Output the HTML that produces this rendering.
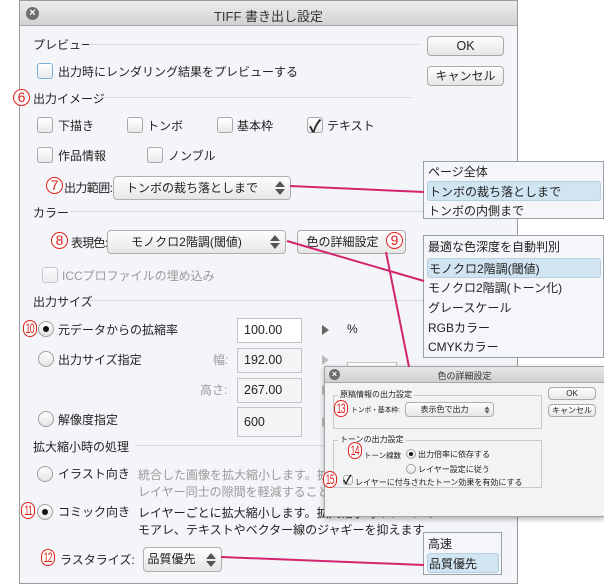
<!DOCTYPE html>
<html><head><meta charset="utf-8">
<style>
*{box-sizing:border-box;margin:0;padding:0}
body{width:604px;height:585px;background:#fff;position:relative;overflow:hidden;font-family:"Liberation Sans","Noto Sans CJK JP",sans-serif;font-size:12px;color:#222}
.a{position:absolute;white-space:nowrap}
#dlg{position:absolute;left:19px;top:0;width:499px;height:584px;background:#f3f5f9;border:1px solid #9a9a9a}
.tb{position:absolute;left:0;top:0;right:0;height:25px;background:linear-gradient(#ececec,#d2d2d2);border-bottom:1px solid #a8a8a8}
.cls{position:absolute;width:13px;height:13px;border-radius:50%;background:#6e6e6e;color:#fff;font-size:11px;line-height:13px;text-align:center;font-weight:bold}
.sec{position:absolute;height:1px;background:#d6d8dc}
.cb{position:absolute;width:16px;height:16px;border:1px solid #a9a9a9;border-radius:3px;background:linear-gradient(#fff,#e9e9e9)}
.rd{position:absolute;width:16px;height:16px;border:1px solid #a0a0a0;border-radius:50%;background:linear-gradient(#fff,#e4e4e4)}
.rd.on::after{content:"";position:absolute;left:4px;top:4px;width:6px;height:6px;border-radius:50%;background:#111}
.rd.s.on::after{left:2px;top:2px;width:4px;height:4px}
.btn{position:absolute;border:1px solid #a9a9a9;border-radius:4px;background:linear-gradient(#fdfdfd,#e6e6e6);text-align:center}
.pop{position:absolute;border:1px solid #b0b0b0;border-radius:4px;background:linear-gradient(#fdfdfd,#e6e6e6);text-align:center}
.arr{position:absolute;right:4px;top:50%;width:12px;height:18px;margin-top:-9px}
.inp{position:absolute;border:1px solid #c4c4c4;background:#fff;padding-left:6px;font-size:12.5px}
.inp.g{background:#f3f4f6}
.num{position:absolute;height:17px;border:1.3px solid #e0201c;border-radius:9px;color:#e0201c;font-size:14px;line-height:15px;text-align:center;width:17px;background:#fff}
.num.w{width:14px;border-radius:7px;overflow:hidden}
.num.w span{display:inline-block;transform:scaleX(.62);margin-left:-6px;margin-right:-6px;letter-spacing:-1px}
.list{position:absolute;border:1px solid #9aa0a8;background:#f4f6f9;font-size:12px}
.list div{position:absolute;left:3px;right:2px;height:20px;line-height:20px;padding-left:1px}
.list .hl{background:#d1e4f1;border:1px solid #b7cfe0;border-radius:3px}
.tri{position:absolute;width:0;height:0;border-top:5px solid transparent;border-bottom:5px solid transparent;border-left:7px solid #666}
.gray{color:#9a9a9a}
#sub{position:absolute;left:324px;top:366px;width:281px;height:151px;background:#f2f3f5;border:1px solid #a5a5a5;box-shadow:0 2px 5px rgba(0,0,0,.3);font-size:8px}
.grp{position:absolute;border:1px solid #c9c9c9}
</style></head><body>

<div id="dlg">
 <div class="tb"><div class="cls" style="left:6px;top:6px">×</div>
  <div class="a" style="left:0;right:0;top:5px;text-align:center;font-size:13px;color:#333">TIFF 書き出し設定</div></div>

 <div class="a" style="left:13px;top:35px">プレビュー</div><div class="sec" style="left:69px;top:43px;width:330px"></div>
 <div class="btn" style="left:407px;top:35px;width:77px;height:20px;line-height:18px;font-size:12.5px">OK</div>
 <div class="btn" style="left:407px;top:65px;width:77px;height:20px;line-height:18px">キャンセル</div>

 <div class="cb" style="left:17px;top:62px;border-color:#7ab0d8"></div><div class="a" style="left:38px;top:62px">出力時にレンダリング結果をプレビューする</div>

 <div class="a" style="left:13px;top:89px">出力イメージ</div><div class="sec" style="left:81px;top:96px;width:310px"></div>

 <div class="cb" style="left:17px;top:116px"></div><div class="a" style="left:38px;top:116px">下描き</div>
 <div class="cb" style="left:107px;top:116px"></div><div class="a" style="left:127px;top:116px">トンボ</div>
 <div class="cb" style="left:197px;top:116px"></div><div class="a" style="left:217px;top:116px">基本枠</div>
 <div class="cb" style="left:287px;top:116px"></div><div class="a" style="left:289px;top:111px;font-size:17px;font-weight:bold">✓</div><div class="a" style="left:307px;top:116px">テキスト</div>
 <div class="cb" style="left:17px;top:146px"></div><div class="a" style="left:38px;top:146px">作品情報</div>
 <div class="cb" style="left:127px;top:146px"></div><div class="a" style="left:148px;top:146px">ノンブル</div>

 <div class="a" style="left:44px;top:178px;letter-spacing:-0.6px">出力範囲:</div>
 <div class="pop" style="left:93px;top:175px;width:178px;height:24px;line-height:22px;padding-right:20px">トンボの裁ち落としまで
  <svg class="arr" viewBox="0 0 12 18"><path d="M6 2L11 8H1Z M6 16L11 10H1Z" fill="#555"/></svg></div>

 <div class="a" style="left:13px;top:203px">カラー</div><div class="sec" style="left:50px;top:210px;width:360px"></div>
 <div class="a" style="left:51px;top:233px;letter-spacing:-0.8px">表現色:</div>
 <div class="pop" style="left:87px;top:229px;width:179px;height:24px;line-height:22px;padding-right:20px">モノクロ2階調(閾値)
  <svg class="arr" viewBox="0 0 12 18"><path d="M6 2L11 8H1Z M6 16L11 10H1Z" fill="#555"/></svg></div>
 <div class="btn" style="left:277px;top:229px;width:109px;height:24px;line-height:22px;padding-right:18px">色の詳細設定</div>

 <div class="cb" style="left:22px;top:266px;opacity:.6"></div><div class="a gray" style="left:42px;top:266px">ICCプロファイルの埋め込み</div>

 <div class="a" style="left:13px;top:292px">出力サイズ</div><div class="sec" style="left:69px;top:299px;width:340px"></div>

 <div class="rd on" style="left:18px;top:320px"></div><div class="a" style="left:38px;top:320px">元データからの拡縮率</div>
 <div class="inp" style="left:217px;top:317px;width:65px;height:25px;line-height:23px">100.00</div>
 <div class="tri" style="left:302px;top:324px"></div><div class="a" style="left:327px;top:321px">%</div>

 <div class="rd" style="left:18px;top:350px"></div><div class="a" style="left:38px;top:350px">出力サイズ指定</div>
 <div class="a gray" style="left:193px;top:350px">幅:</div>
 <div class="inp g" style="left:217px;top:347px;width:65px;height:25px;line-height:23px">192.00</div>
 <div class="tri" style="left:302px;top:354px;border-left-color:#bbb"></div>
 <div class="a" style="left:327px;top:361px;width:50px;height:20px;border:1px solid #c4c4c4;background:#fff"></div>
 <div class="a gray" style="left:180px;top:380px">高さ:</div>
 <div class="inp g" style="left:217px;top:377px;width:65px;height:25px;line-height:23px">267.00</div>
 <div class="tri" style="left:302px;top:384px;border-left-color:#bbb"></div>

 <div class="rd" style="left:18px;top:410px"></div><div class="a" style="left:38px;top:410px">解像度指定</div>
 <div class="inp g" style="left:217px;top:406px;width:65px;height:30px;line-height:28px">600</div>
 <div class="tri" style="left:302px;top:416px;border-left-color:#bbb"></div>

 <div class="a" style="left:13px;top:437px">拡大縮小時の処理</div><div class="sec" style="left:115px;top:444px;width:300px"></div>

 <div class="rd" style="left:17px;top:465px"></div><div class="a" style="left:38px;top:464px">イラスト向き</div>
 <div class="a gray" style="left:118px;top:465px">統合した画像を拡大縮小します。拡大</div>
 <div class="a gray" style="left:118px;top:482px">レイヤー同士の隙間を軽減することか</div>

 <div class="rd on" style="left:17px;top:503px"></div><div class="a" style="left:38px;top:502px">コミック向き</div>
 <div class="a" style="left:118px;top:503px">レイヤーごとに拡大縮小します。拡大縮小時のトーンの</div>
 <div class="a" style="left:118px;top:520px">モアレ、テキストやベクター線のジャギーを抑えます</div>

 <div class="a" style="left:40px;top:550px">ラスタライズ:</div>
 <div class="pop" style="left:123px;top:546px;width:79px;height:25px;line-height:23px;padding-right:22px">品質優先
  <svg class="arr" viewBox="0 0 12 18"><path d="M6 2L11 8H1Z M6 16L11 10H1Z" fill="#555"/></svg></div>
</div>

<!-- lists -->
<div class="list" style="left:423px;top:161px;width:181px;height:58px">
 <div style="top:0">ページ全体</div><div class="hl" style="top:19px">トンボの裁ち落としまで</div><div style="top:39px">トンボの内側まで</div></div>
<div class="list" style="left:423px;top:235px;width:181px;height:123px">
 <div style="top:1px">最適な色深度を自動判別</div><div class="hl" style="top:22px">モノクロ2階調(閾値)</div><div style="top:42px">モノクロ2階調(トーン化)</div><div style="top:62px">グレースケール</div><div style="top:82px">RGBカラー</div><div style="top:101px">CMYKカラー</div></div>
<div class="list" style="left:423px;top:532px;width:79px;height:43px">
 <div style="top:1px">高速</div><div class="hl" style="top:20px">品質優先</div></div>

<!-- sub dialog -->
<div id="sub">
 <div class="tb" style="height:16px;background:linear-gradient(#e6e6e6,#d0d0d0)"><div class="cls" style="left:4px;top:2px;width:11px;height:11px;font-size:9px;line-height:11px">×</div>
  <div class="a" style="left:0;right:0;top:2px;text-align:center;font-size:9px;color:#333">色の詳細設定</div></div>
 <div class="grp" style="left:8px;top:28px;width:209px;height:34px"></div>
 <div class="a" style="left:13px;top:22px;background:#f2f3f5;padding:0 2px">原稿情報の出力設定</div>
 <div class="a" style="left:26px;top:38px;font-size:7px;letter-spacing:-0.3px">トンボ・基本枠:</div>
 <div class="pop" style="left:80px;top:35px;width:89px;height:15px;line-height:13px;padding-right:10px;font-size:8px">表示色で出力
  <svg style="position:absolute;right:3px;top:2px" width="6" height="10" viewBox="0 0 12 18"><path d="M6 2L11 8H1Z M6 16L11 10H1Z" fill="#555"/></svg></div>
 <div class="btn" style="left:223px;top:20px;width:48px;height:13px;line-height:11px;font-size:8px">OK</div>
 <div class="btn" style="left:223px;top:37px;width:48px;height:13px;line-height:11px">キャンセル</div>
 <div class="grp" style="left:8px;top:73px;width:209px;height:48px"></div>
 <div class="a" style="left:13px;top:67px;background:#f2f3f5;padding:0 2px">トーンの出力設定</div>
 <div class="a" style="left:39px;top:83px;font-size:7.5px">トーン線数</div>
 <div class="rd s on" style="left:81px;top:82px;width:10px;height:10px"></div>
 <div class="a" style="left:93px;top:82px">出力倍率に依存する</div>
 <div class="rd s" style="left:81px;top:97px;width:10px;height:10px"></div>
 <div class="a" style="left:93px;top:97px">レイヤー設定に従う</div>
 <div class="cb" style="left:18px;top:108px;width:10px;height:10px"></div>
 <div class="a" style="left:18px;top:104px;font-size:12px;font-weight:bold">✓</div>
 <div class="a" style="left:30px;top:110px">レイヤーに付与されたトーン効果を有効にする</div>
</div>

<!-- pink lines -->
<svg class="a" style="left:0;top:0" width="604" height="585"><g stroke="#d4246e" stroke-width="2" fill="none">
 <path d="M290 186L424 192"/><path d="M287 241L424 281"/><path d="M386 252L409 367"/><path d="M221 557L424 565"/>
</g></svg>

<!-- circled numbers -->
<div class="num" style="left:13px;top:89px">6</div>
<div class="num" style="left:46px;top:177px">7</div>
<div class="num" style="left:51px;top:232px">8</div>
<div class="num" style="left:386px;top:232px">9</div>
<div class="num w" style="left:23px;top:320px"><span>10</span></div>
<div class="num w" style="left:21px;top:502px"><span>11</span></div>
<div class="num w" style="left:41px;top:549px"><span>12</span></div>
<div class="num w" style="left:334px;top:400px"><span>13</span></div>
<div class="num w" style="left:348px;top:442px"><span>14</span></div>
<div class="num w" style="left:323px;top:471px"><span>15</span></div>
</body></html>
